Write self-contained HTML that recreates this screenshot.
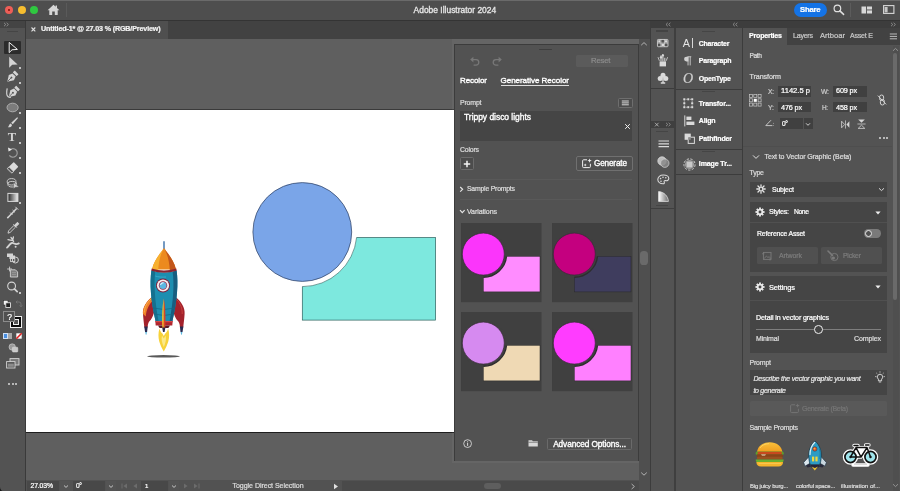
<!DOCTYPE html>
<html><head><meta charset="utf-8"><title>Adobe Illustrator 2024</title>
<style>
html,body{margin:0;padding:0;background:#535353;}
#app{will-change:transform;position:relative;width:900px;height:491px;overflow:hidden;background:#535353;font-family:"Liberation Sans",sans-serif;}
#app div,#app span,#app svg{position:absolute;}
.t{white-space:pre;line-height:12px;height:12px;-webkit-text-stroke:0.22px currentColor;}
svg{overflow:visible;}
</style></head><body><div id="app">
<div style="position:absolute;left:0px;top:20px;width:650px;height:19px;background:#424242;"></div><div style="position:absolute;left:26px;top:39px;width:624px;height:441px;background:#5f5f5f;"></div><div style="position:absolute;left:26px;top:21px;width:142px;height:18px;background:#4f4f4f;"></div><svg style="left:30px;top:26px" width="7" height="7" viewBox="0 0 7 7"><path d="M1.500 1.500L5.300 5.300M5.300 1.500L1.500 5.300" stroke="#e0e0e0" stroke-width="1.100" fill="none"/></svg>
<div style="position:absolute;left:26px;top:109px;width:428px;height:323px;background:#ffffff;"></div><div style="position:absolute;left:26px;top:432px;width:428px;height:1px;background:#1e1e1e;"></div><div style="position:absolute;left:26px;top:108.5px;width:428px;height:0.5px;background:#3a3a3a;"></div><div style="position:absolute;left:638.5px;top:39px;width:11.5px;height:452px;background:#4f4f4f;"></div><div style="position:absolute;left:640.2px;top:250.5px;width:7.8px;height:14.5px;background:#6a6a6a;border-radius:3.6px;"></div><svg style="left:640px;top:41px" width="8" height="6" viewBox="0 0 8 6"><path d="M1.2 4.2L4 1.6L6.8 4.2" stroke="#bdbdbd" stroke-width="0.9" fill="none"/></svg>
<svg style="left:640px;top:471px" width="8" height="6" viewBox="0 0 8 6"><path d="M1.2 1.6L4 4.2L6.8 1.6" stroke="#bdbdbd" stroke-width="0.9" fill="none"/></svg>
<svg style="left:0px;top:0px" width="900" height="491" viewBox="0 0 900 491"><defs><mask id="cut"><rect x="0" y="0" width="900" height="491" fill="#fff"/><circle cx="302.3" cy="232" r="54.6" fill="#000"/></mask></defs><rect x="302.3" y="237.5" width="133.3" height="82.6" fill="#7de8de" stroke="#2d5f5c" stroke-width="0.7" mask="url(#cut)"/><path d="M302.3 286.600A54.600 54.600 0 0 0 356.600 237.500" fill="none" stroke="#2d5f5c" stroke-width="0.6"/><circle cx="302.3" cy="232" r="49.4" fill="#7aa5e8" stroke="#2c3d5e" stroke-width="0.7"/></svg>
<svg style="left:0px;top:0px" width="900" height="491" viewBox="0 0 900 491">
<defs><filter id="shb" x="-20%" y="-200%" width="140%" height="500%"><feGaussianBlur stdDeviation="0.7"/></filter></defs>
<ellipse cx="163.5" cy="356.3" rx="16.500" ry="1.300" fill="#3c3c3c" opacity="0.850" filter="url(#shb)"/>
<path d="M164 241.200V249" stroke="#3a6fa8" stroke-width="1.400"/>
<path d="M163.800 351.500C160 345 156.800 338 159.400 328.500C160.400 331.500 161.600 333 162.400 333.500L163.800 336L165.200 333.500C166 333 167.200 331.500 168.200 328.500C170.800 338 167.600 345 163.800 351.500Z" fill="#f7d23a"/>
<path d="M163.800 347C162 343 161 339 162 335.500L163.800 338.500L165.600 335.500C166.600 339 165.600 343 163.800 347Z" fill="#fbe98a"/>
<g id="finL">
<path d="M152.600 296.500C146 301.500 142.400 308 143 314C143.300 319 143.900 323 144.400 327.500L147.600 327.500C147.800 323.500 148.800 321.500 150.600 320C152 318 154 314 155 309Z" fill="#a3222c"/>
<path d="M144.200 326.600H147.700L147.100 332H145.100Z" fill="#2a2a50"/>
<path d="M145.200 332H147L146.400 334.800H145.800Z" fill="#5ab8e0"/>
</g>
<path d="M152.600 296.500C146 301.500 142.400 308 143 314L145.800 316.500C146.200 309.500 149.400 303.500 153.600 300Z" fill="#ee7f2a"/>
<path d="M151.400 298.600C147 302.500 144.400 307.500 144.200 312.500" stroke="#f9b44a" stroke-width="0.900" fill="none"/>
<g transform="translate(327.600 0) scale(-1 1)">
<path d="M152.600 296.500C146 301.500 142.400 308 143 314C143.300 319 143.900 323 144.400 327.500L147.600 327.500C147.800 323.500 148.800 321.500 150.600 320C152 318 154 314 155 309Z" fill="#a3222c"/>
<path d="M151 299.500C147 303.500 145.200 308.500 145.400 314" stroke="#c8403c" stroke-width="1" fill="none"/>
<path d="M144.200 326.600H147.700L147.100 332H145.100Z" fill="#2a2a50"/>
<path d="M145.200 332H147L146.400 334.800H145.800Z" fill="#5ab8e0"/>
</g>
<path d="M151.400 270.500C149.600 283 150.600 300 155.600 321.300L172.400 321.300C177.400 300 178.400 283 176.600 270.500Q164 274.500 151.400 270.500Z" fill="#1c8eb0"/>
<path d="M151.400 270.500C149.600 283 150.600 300 155.600 321.300L158.600 321.300C154.600 300 153.800 284 155.200 271.600Z" fill="#15708e"/>
<path d="M172.600 271.700C174.400 284 173.400 300 169.600 321.300L172.400 321.300C177.400 300 178.400 283 176.600 270.500Z" fill="#175e80"/>
<path d="M153 308Q164 311 174.800 308M154.200 314Q164 317 173.600 314" stroke="#136a88" stroke-width="0.800" fill="none"/>
<path d="M155.300 276C158 277 162 277.400 166 277" stroke="#3fb0cf" stroke-width="0.800" fill="none"/>
<path d="M164 248C161.500 252 154 260 152 269.400L176 269.400C174 260 166.500 252 164 248Z" fill="#ec8a1e"/>
<path d="M164 248C161.500 252 154 260 152 269.400L158.200 270.200C158.600 261 161 253 164 248Z" fill="#f7b030"/>
<path d="M164 248C166.500 252 174 260 176 269.400L169.800 270.200C169.400 261 167 253 164 248Z" fill="#c2561a"/>
<path d="M151.700 268.500Q164 272.300 176.300 268.500L176.700 270.700Q164 274.600 151.300 270.700Z" fill="#8a2430"/>
<circle cx="163" cy="285.500" r="7" fill="#7e1f3c"/>
<circle cx="163" cy="285.500" r="6.100" fill="#f6eeee"/>
<circle cx="163" cy="285.500" r="4.200" fill="#a02848"/>
<circle cx="163" cy="285.500" r="3.500" fill="#5bb8e2"/>
<path d="M160.600 285A2.600 2.600 0 0 1 163.600 282.800" stroke="#ffffff" stroke-width="1" fill="none"/>
<path d="M155.300 321H172.700L172.300 325.400H155.700Z" fill="#b0262e"/>
<path d="M155.300 321H172.700V322.200H155.300Z" fill="#d04a4a"/>
<path d="M158 325.400H170L168.400 328H159.600Z" fill="#5a1a26"/>
<path d="M163.800 298.500C162.200 306 161.800 318 162.400 328H163.800Z" fill="#f5c02c"/>
<path d="M163.800 298.500C165.400 306 165.800 318 165.200 328H163.800Z" fill="#d8452a"/>
<path d="M162.200 327.500H165.400L164.600 332H163Z" fill="#2a2a4a"/>
</svg>
<div style="position:absolute;left:451.5px;top:39px;width:187px;height:424.3px;background:rgba(255,255,255,0.045);"></div><div style="position:absolute;left:453.8px;top:43.9px;width:184.9px;height:417.3px;background:#3c3c3c;"></div><div style="position:absolute;left:454.9px;top:45.1px;width:183.2px;height:415.5px;background:#525252;"></div><div style="position:absolute;left:539px;top:48.7px;width:13px;height:1.6px;background:#3e3e3e;border-radius:1px;"></div><svg style="left:469px;top:56px" width="12" height="11" viewBox="0 0 12 11"><path d="M2.400 3.600H7A2.800 2.800 0 0 1 7 9.200H4.600" stroke="#787878" stroke-width="1.300" fill="none"/><path d="M4.400 0.800L1.200 3.600L4.400 6.400Z" fill="#787878"/></svg>
<svg style="left:491px;top:56px" width="12" height="11" viewBox="0 0 12 11"><path d="M9.600 3.600H5A2.800 2.800 0 0 0 5 9.200H7.400" stroke="#787878" stroke-width="1.300" fill="none"/><path d="M7.600 0.800L10.800 3.600L7.600 6.400Z" fill="#787878"/></svg>
<div style="position:absolute;left:576px;top:55.3px;width:52px;height:11.7px;background:#5b5b5b;border-radius:1.5px;"></div><div style="position:absolute;left:500.5px;top:84.5px;width:68.5px;height:0.8px;background:#dedede;"></div><div style="position:absolute;left:618px;top:97.5px;width:14.5px;height:10.5px;background:#4c4c4c;box-sizing:border-box;border:0.8px solid #6e6e6e;border-radius:1.5px;"></div><svg style="left:621px;top:100px" width="9" height="6" viewBox="0 0 9 6"><path d="M0.800 1H7.800M0.800 2.900H7.800M0.800 4.800H7.800" stroke="#e6e6e6" stroke-width="0.9"/></svg>
<div style="position:absolute;left:460px;top:111.3px;width:172px;height:29.4px;background:#454545;"></div><svg style="left:623.5px;top:123px" width="7" height="7" viewBox="0 0 7 7"><path d="M1.200 1.200L5.800 5.800M5.800 1.200L1.200 5.800" stroke="#f0f0f0" stroke-width="1" fill="none"/></svg>
<div style="position:absolute;left:460px;top:157px;width:14.4px;height:13.4px;background:#4c4c4c;box-sizing:border-box;border:0.8px solid #6c6c6c;border-radius:1.5px;"></div><svg style="left:463.2px;top:159.7px" width="8" height="8" viewBox="0 0 8 8"><path d="M4 0.800V7.200M0.800 4H7.200" stroke="#f4f4f4" stroke-width="1.500"/></svg>
<div style="position:absolute;left:575.5px;top:155.8px;width:57.2px;height:15.1px;background:#505050;box-sizing:border-box;border:0.8px solid #707070;border-radius:2px;"></div><svg style="left:580.5px;top:158.3px" width="11" height="11" viewBox="0 0 11 11"><path d="M6 1.800H2.600A1 1 0 0 0 1.600 2.800V8.600A1 1 0 0 0 2.600 9.600H8.400A1 1 0 0 0 9.400 8.600V5.800" stroke="#f0f0f0" stroke-width="1" fill="none"/><path d="M8.600 0.400L9.200 2L10.800 2.600L9.200 3.200L8.600 4.800L8 3.200L6.400 2.600L8 2Z" fill="#f0f0f0"/><path d="M4.200 5.600L4.700 6.600L5.700 7.100L4.700 7.600L4.200 8.600L3.700 7.600L2.700 7.100L3.700 6.600Z" fill="#f0f0f0"/></svg>
<div style="position:absolute;left:460px;top:179px;width:172px;height:0.8px;background:#595959;"></div><div style="position:absolute;left:460px;top:199px;width:172px;height:0.8px;background:#595959;"></div><svg style="left:459px;top:186px" width="5" height="7" viewBox="0 0 5 7"><path d="M1.200 1L3.600 3.300L1.200 5.600" stroke="#e6e6e6" stroke-width="1.150" fill="none"/></svg>
<svg style="left:458.5px;top:209px" width="7" height="5" viewBox="0 0 7 5"><path d="M1 1.200L3.300 3.600L5.600 1.200" stroke="#e6e6e6" stroke-width="1.150" fill="none"/></svg>
<svg style="left:461px;top:222.6px" width="80.5" height="79.2" viewBox="0 0 80.5 79.2"><rect x="0" y="0" width="80.5" height="79.2" fill="#404040"/><clipPath id="c461222"><rect x="0" y="0" width="80.5" height="79.2"/></clipPath><g clip-path="url(#c461222)"><rect x="22.3" y="33.3" width="56.7" height="35.6" fill="#ff8cff" stroke="#2a2a2a" stroke-width="0.5"/><circle cx="22.3" cy="31.1" r="23.2" fill="#404040"/><path d="M22.3 54.300000000000004A23.2 23.2 0 0 0 45.5 33.3" stroke="#2e2e2e" stroke-width="1.4" fill="none"/><circle cx="22.3" cy="31.1" r="21.0" fill="#fb35fb" stroke="#3a2a3a" stroke-width="0.7"/></g></svg>
<svg style="left:551.5px;top:222.6px" width="80.5" height="79.2" viewBox="0 0 80.5 79.2"><rect x="0" y="0" width="80.5" height="79.2" fill="#404040"/><clipPath id="c551222"><rect x="0" y="0" width="80.5" height="79.2"/></clipPath><g clip-path="url(#c551222)"><rect x="22.3" y="33.3" width="56.7" height="35.6" fill="#3f3d5e" stroke="#2a2a2a" stroke-width="0.5"/><circle cx="22.3" cy="31.1" r="23.2" fill="#404040"/><path d="M22.3 54.300000000000004A23.2 23.2 0 0 0 45.5 33.3" stroke="#2e2e2e" stroke-width="1.4" fill="none"/><circle cx="22.3" cy="31.1" r="21.0" fill="#c4007f" stroke="#3a2a3a" stroke-width="0.7"/></g></svg>
<svg style="left:461px;top:312.2px" width="80.5" height="79.2" viewBox="0 0 80.5 79.2"><rect x="0" y="0" width="80.5" height="79.2" fill="#404040"/><clipPath id="c461312"><rect x="0" y="0" width="80.5" height="79.2"/></clipPath><g clip-path="url(#c461312)"><rect x="22.3" y="33.3" width="56.7" height="35.6" fill="#efd9b4" stroke="#2a2a2a" stroke-width="0.5"/><circle cx="22.3" cy="31.1" r="23.2" fill="#404040"/><path d="M22.3 54.300000000000004A23.2 23.2 0 0 0 45.5 33.3" stroke="#2e2e2e" stroke-width="1.4" fill="none"/><circle cx="22.3" cy="31.1" r="21.0" fill="#d68af0" stroke="#3a2a3a" stroke-width="0.7"/></g></svg>
<svg style="left:551.5px;top:312.2px" width="80.5" height="79.2" viewBox="0 0 80.5 79.2"><rect x="0" y="0" width="80.5" height="79.2" fill="#404040"/><clipPath id="c551312"><rect x="0" y="0" width="80.5" height="79.2"/></clipPath><g clip-path="url(#c551312)"><rect x="22.3" y="33.3" width="56.7" height="35.6" fill="#ff80ff" stroke="#2a2a2a" stroke-width="0.5"/><circle cx="22.3" cy="31.1" r="23.2" fill="#404040"/><path d="M22.3 54.300000000000004A23.2 23.2 0 0 0 45.5 33.3" stroke="#2e2e2e" stroke-width="1.4" fill="none"/><circle cx="22.3" cy="31.1" r="21.0" fill="#ff3cff" stroke="#3a2a3a" stroke-width="0.7"/></g></svg>
<svg style="left:463px;top:439.3px" width="10" height="10" viewBox="0 0 10 10"><circle cx="4.600" cy="4.600" r="3.900" stroke="#e6e6e6" stroke-width="0.8" fill="none"/><path d="M4.600 3.900V6.900" stroke="#e6e6e6" stroke-width="0.9"/><circle cx="4.600" cy="2.700" r="0.550" fill="#e6e6e6"/></svg>
<svg style="left:527.5px;top:439.3px" width="11" height="9" viewBox="0 0 11 9"><path d="M0.500 1.200H4L4.900 2.200H9.800V7.600H0.500Z" fill="#d8d8d8"/><path d="M0.500 3.300H9.800" stroke="#535353" stroke-width="0.6"/></svg>
<div style="position:absolute;left:546.8px;top:437.5px;width:85.4px;height:12.2px;background:#505050;box-sizing:border-box;border:0.8px solid #6a6a6a;border-radius:1.5px;"></div><div style="position:absolute;left:650px;top:20px;width:250px;height:8px;background:#3d3d3d;"></div><svg style="left:665px;top:21.7px" width="7" height="5" viewBox="0 0 7 5"><path d="M2.800 0.800L1 2.500L2.800 4.200M5.400 0.800L3.600 2.500L5.400 4.200" stroke="#9a9a9a" stroke-width="0.8" fill="none"/></svg>
<svg style="left:732px;top:21.7px" width="7" height="5" viewBox="0 0 7 5"><path d="M2.800 0.800L1 2.500L2.800 4.200M5.400 0.800L3.600 2.500L5.400 4.200" stroke="#9a9a9a" stroke-width="0.8" fill="none"/></svg>
<svg style="left:890px;top:21.7px" width="7" height="5" viewBox="0 0 7 5"><path d="M1 0.800L2.800 2.500L1 4.200M3.600 0.800L5.400 2.500L3.600 4.200" stroke="#9a9a9a" stroke-width="0.8" fill="none"/></svg>
<div style="position:absolute;left:650px;top:28px;width:1px;height:463px;background:#3c3c3c;"></div><div style="position:absolute;left:651px;top:27.5px;width:22.8px;height:463.5px;background:#535353;"></div><div style="position:absolute;left:673.8px;top:27.5px;width:2.2px;height:463.5px;background:#3f3f3f;"></div><div style="position:absolute;left:656px;top:30.3px;width:12px;height:1.7px;background:#434343;"></div><div style="position:absolute;left:651px;top:88px;width:22.8px;height:1px;background:#3c3c3c;"></div><svg style="left:656.6px;top:38.8px" width="11.8" height="8.2" viewBox="0 0 13 9"><rect x="0.500" y="0.500" width="11.600" height="8" rx="0.8" fill="none" stroke="#dadada" stroke-width="0.9"/><path d="M0.500 4.500H12M4.300 0.500V8.500M8.200 0.500V8.500" stroke="#dadada" stroke-width="0.8"/><rect x="1.300" y="1.300" width="2.400" height="2.600" fill="#dadada"/><rect x="8.800" y="1.300" width="2.600" height="2.600" fill="#dadada"/><rect x="4.900" y="5.100" width="2.800" height="2.700" fill="#dadada"/></svg>
<svg style="left:657px;top:54px" width="12" height="13" viewBox="0 0 12 13"><rect x="2.600" y="7.400" width="6.400" height="5" fill="#dadada"/><path d="M4 7.400V3.400M5.900 7.400V1.200M7.800 7.400V3.800" stroke="#dadada" stroke-width="1"/><path d="M3 4L4 1.600L5 4ZM5 2L5.900 0L6.800 2ZM1 3.200L2.400 6.800M10.600 3.200L9.200 6.800" stroke="#dadada" stroke-width="0.8" fill="#dadada"/></svg>
<svg style="left:657px;top:72px" width="12" height="12" viewBox="0 0 12 12"><circle cx="6" cy="3.200" r="2.500" fill="#dadada"/><circle cx="3.200" cy="6.400" r="2.500" fill="#dadada"/><circle cx="8.800" cy="6.400" r="2.500" fill="#dadada"/><path d="M6 5V10.400M3.800 11H8.200" stroke="#dadada" stroke-width="1.300"/></svg>
<div style="position:absolute;left:650.5px;top:120.5px;width:23.5px;height:88px;background:#3f3f3f;"></div><div style="position:absolute;left:651px;top:128px;width:22.8px;height:80px;background:#535353;"></div><svg style="left:653.5px;top:122px" width="6" height="5.5" viewBox="0 0 6 5.5"><path d="M1 0.800L4.600 4.400M4.600 0.800L1 4.400" stroke="#c0c0c0" stroke-width="0.8" fill="none"/></svg>
<svg style="left:665px;top:122.2px" width="7" height="5" viewBox="0 0 7 5"><path d="M1 0.800L2.800 2.500L1 4.200M3.600 0.800L5.400 2.500L3.600 4.200" stroke="#9a9a9a" stroke-width="0.8" fill="none"/></svg>
<div style="position:absolute;left:656px;top:131px;width:12px;height:1.2px;background:#454545;"></div><div style="position:absolute;left:656px;top:205px;width:12px;height:1.2px;background:#454545;"></div><svg style="left:657.5px;top:139.5px" width="12" height="8" viewBox="0 0 12 8"><path d="M0.500 1H11M0.500 3.800H11M0.500 6.600H11" stroke="#dadada" stroke-width="1.200"/></svg>
<svg style="left:656.5px;top:155.5px" width="13" height="12" viewBox="0 0 13 12"><circle cx="5" cy="5" r="4.200" fill="#bdbdbd" stroke="#e0e0e0" stroke-width="0.7"/><circle cx="7.800" cy="7.200" r="4.200" fill="#8a8a8a" stroke="#d0d0d0" stroke-width="0.7" fill-opacity="0.85"/></svg>
<svg style="left:656.5px;top:174px" width="13" height="11" viewBox="0 0 13 11"><path d="M6.400 1C3 1 0.800 3 0.800 5.600C0.800 8.200 3.200 9.800 6 9.800C7.400 9.800 7.600 8.800 7.200 8C6.800 7 7.600 6.400 8.600 6.600C10.400 7 11.800 6 11.800 4.400C11.800 2.400 9.400 1 6.400 1Z" fill="none" stroke="#dadada" stroke-width="1.100"/><circle cx="3.600" cy="4.600" r="0.800" fill="#dadada"/><circle cx="6" cy="3.200" r="0.800" fill="#dadada"/><circle cx="8.800" cy="3.800" r="0.800" fill="#dadada"/><circle cx="4" cy="7.200" r="0.800" fill="#dadada"/></svg>
<svg style="left:658px;top:191px" width="11" height="11" viewBox="0 0 11 11"><defs><linearGradient id="gr1" x1="0" x2="1"><stop offset="0" stop-color="#ffffff"/><stop offset="1" stop-color="#6a6a6a"/></linearGradient></defs><path d="M0.600 10.400V0.600C6 1 10 5 10.400 10.400Z" fill="url(#gr1)" stroke="#e0e0e0" stroke-width="0.8"/></svg>
<div style="position:absolute;left:676px;top:27.5px;width:66px;height:463.5px;background:#535353;"></div><div style="position:absolute;left:742px;top:28px;width:1px;height:463px;background:#3c3c3c;"></div><div style="position:absolute;left:676px;top:88.5px;width:66px;height:1px;background:#3c3c3c;"></div><div style="position:absolute;left:676px;top:148.5px;width:66px;height:1px;background:#3c3c3c;"></div><div style="position:absolute;left:676px;top:173.8px;width:66px;height:1px;background:#3c3c3c;"></div><div style="position:absolute;left:702px;top:31px;width:13px;height:1.2px;background:#454545;"></div><div style="position:absolute;left:702px;top:91px;width:13px;height:1.2px;background:#454545;"></div><div style="position:absolute;left:702px;top:151px;width:13px;height:1.2px;background:#454545;"></div><span class="t" style="left:682.8px;top:36.5px;font-size:10.8px;line-height:13px;height:13px;color:#e4e4e4;-webkit-text-stroke:0;">A</span><div style="position:absolute;left:692.2px;top:38.3px;width:0.8px;height:9.4px;background:#d8d8d8;"></div><svg style="left:682.7px;top:55.7px" width="9" height="10" viewBox="0 0 10 11"><path d="M6 0.800H3.800A2.600 2.600 0 0 0 3.800 6H6Z" fill="#d0d0d0"/><path d="M5.600 0.800V10.400M8 0.800V10.400M5 0.800H9.200" stroke="#d0d0d0" stroke-width="1"/></svg>
<span class="t" style="left:683px;top:70.600px;font-family:'Liberation Serif',serif;font-style:italic;font-size:14px;line-height:15px;height:15px;color:#cfcfcf;">O</span><svg style="left:683px;top:98.3px" width="10.5" height="10.5" viewBox="0 0 10.5 10.5"><rect x="1.300" y="1.300" width="7.900" height="7.900" fill="none" stroke="#dadada" stroke-width="0.700" stroke-dasharray="1 0.900"/><rect x="0.3" y="0.3" width="2" height="2" fill="#dadada"/><rect x="4.25" y="0.3" width="2" height="2" fill="#dadada"/><rect x="8.2" y="0.3" width="2" height="2" fill="#dadada"/><rect x="0.3" y="4.25" width="2" height="2" fill="#dadada"/><rect x="8.2" y="4.25" width="2" height="2" fill="#dadada"/><rect x="0.3" y="8.2" width="2" height="2" fill="#dadada"/><rect x="4.25" y="8.2" width="2" height="2" fill="#dadada"/><rect x="8.2" y="8.2" width="2" height="2" fill="#dadada"/></svg>
<svg style="left:683.5px;top:115px" width="11" height="12" viewBox="0 0 11 12"><path d="M0.800 0.400V11.400" stroke="#dadada" stroke-width="1"/><rect x="2.400" y="1.600" width="5" height="3.400" fill="#dadada"/><rect x="2.400" y="6.600" width="8" height="3.400" fill="#dadada"/></svg>
<svg style="left:683.5px;top:133px" width="11" height="11" viewBox="0 0 11 11"><rect x="0.600" y="0.600" width="6.200" height="6.200" fill="#dadada"/><rect x="4.200" y="4.200" width="6.200" height="6.200" fill="#535353" stroke="#dadada" stroke-width="1"/><rect x="4.200" y="4.200" width="2.600" height="2.600" fill="#8c8c8c"/></svg>
<svg style="left:682.5px;top:157.5px" width="13" height="13" viewBox="0 0 13 13"><circle cx="6.500" cy="6.500" r="4.600" fill="#9a9a9a"/><circle cx="6.500" cy="6.500" r="5.600" fill="none" stroke="#dadada" stroke-width="0.9" stroke-dasharray="2.400 1.400"/><rect x="3.800" y="3.800" width="5.400" height="5.400" fill="#c8c8c8"/></svg>
<div style="position:absolute;left:743px;top:28px;width:157px;height:16.5px;background:#424242;"></div><div style="position:absolute;left:743px;top:28px;width:43.5px;height:16.5px;background:#535353;"></div><div style="position:absolute;left:743px;top:44.5px;width:157px;height:446.5px;background:#535353;"></div><svg style="left:889px;top:33px" width="9" height="7" viewBox="0 0 9 7"><path d="M0.800 1H8M0.800 3.400H8M0.800 5.800H8" stroke="#c8c8c8" stroke-width="0.900"/></svg>
<div style="position:absolute;left:892.5px;top:46px;width:6px;height:445px;background:#4f4f4f;"></div><div style="position:absolute;left:893.3px;top:53px;width:4.2px;height:247px;background:#6a6a6a;border-radius:2.100px;"></div><svg style="left:892px;top:46.5px" width="7" height="5" viewBox="0 0 7 5"><path d="M1 3.800L3.500 1.400L6 3.800" stroke="#9a9a9a" stroke-width="0.900" fill="none"/></svg>
<svg style="left:892px;top:483px" width="7" height="5" viewBox="0 0 7 5"><path d="M1 1.200L3.500 3.600L6 1.200" stroke="#9a9a9a" stroke-width="0.900" fill="none"/></svg>
<svg style="left:749px;top:93.5px" width="13" height="13" viewBox="0 0 13 13"><rect x="0.50" y="0.50" width="3" height="3" fill="none" stroke="#c8c8c8" stroke-width="0.700"/><rect x="4.80" y="0.50" width="3" height="3" fill="none" stroke="#c8c8c8" stroke-width="0.700"/><rect x="9.10" y="0.50" width="3" height="3" fill="none" stroke="#c8c8c8" stroke-width="0.700"/><rect x="0.50" y="4.80" width="3" height="3" fill="none" stroke="#c8c8c8" stroke-width="0.700"/><rect x="4.80" y="4.80" width="3" height="3" fill="#ffffff"/><rect x="9.10" y="4.80" width="3" height="3" fill="none" stroke="#c8c8c8" stroke-width="0.700"/><rect x="0.50" y="9.10" width="3" height="3" fill="none" stroke="#c8c8c8" stroke-width="0.700"/><rect x="4.80" y="9.10" width="3" height="3" fill="none" stroke="#c8c8c8" stroke-width="0.700"/><rect x="9.10" y="9.10" width="3" height="3" fill="none" stroke="#c8c8c8" stroke-width="0.700"/></svg>
<div style="position:absolute;left:778px;top:86.4px;width:33px;height:10.6px;background:#404040;"></div><div style="position:absolute;left:833px;top:86.4px;width:34px;height:10.6px;background:#404040;"></div><div style="position:absolute;left:778px;top:101.8px;width:33px;height:10.6px;background:#404040;"></div><div style="position:absolute;left:833px;top:101.8px;width:34px;height:10.6px;background:#404040;"></div><div style="position:absolute;left:779.7px;top:118px;width:23px;height:11px;background:#404040;"></div><div style="position:absolute;left:803.5px;top:118px;width:9.5px;height:11px;background:#404040;"></div><svg style="left:805.3px;top:121.5px" width="6" height="5" viewBox="0 0 6 5"><path d="M1 1.300L3 3.300L5 1.300" stroke="#e0e0e0" stroke-width="0.900" fill="none"/></svg>
<svg style="left:764.5px;top:118.5px" width="10" height="9" viewBox="0 0 10 9"><path d="M6 1.200L0.800 6.600H7.400" stroke="#d0d0d0" stroke-width="0.900" fill="none"/><circle cx="8.600" cy="4.200" r="0.450" fill="#d0d0d0"/><circle cx="8.600" cy="6.600" r="0.450" fill="#d0d0d0"/></svg>
<svg style="left:877px;top:93.5px" width="10" height="12" viewBox="0 0 10 12"><rect x="2.600" y="1" width="4" height="5.600" rx="2" fill="none" stroke="#d6d6d6" stroke-width="1"/><rect x="3.400" y="5.400" width="4" height="5.600" rx="2" fill="none" stroke="#d6d6d6" stroke-width="1"/><path d="M0.800 1.600L9.200 10.400" stroke="#d6d6d6" stroke-width="0.900"/></svg>
<svg style="left:840.5px;top:119.5px" width="9" height="9" viewBox="0 0 9 9"><path d="M0.600 1.200L3.600 4.500L0.600 7.800Z" fill="none" stroke="#d6d6d6" stroke-width="0.800"/><path d="M8.400 1.200L5.400 4.500L8.400 7.800Z" fill="#d6d6d6"/><path d="M4.500 0.400V8.600" stroke="#d6d6d6" stroke-width="0.700"/></svg>
<svg style="left:856.5px;top:119px" width="9" height="10" viewBox="0 0 9 10"><path d="M1.200 0.600L4.500 3.800L7.800 0.600Z" fill="#d6d6d6"/><path d="M1.200 9.400L4.500 6.200L7.800 9.400Z" fill="none" stroke="#d6d6d6" stroke-width="0.800"/><path d="M0.400 5H8.600" stroke="#d6d6d6" stroke-width="0.700"/></svg>
<div style="position:absolute;left:879.3px;top:136.8px;width:2px;height:2px;background:#d8d8d8;border-radius:50%;"></div><div style="position:absolute;left:882.5px;top:136.8px;width:2px;height:2px;background:#d8d8d8;border-radius:50%;"></div><div style="position:absolute;left:885.6999999999999px;top:136.8px;width:2px;height:2px;background:#d8d8d8;border-radius:50%;"></div><div style="position:absolute;left:743px;top:145.8px;width:149px;height:0.8px;background:#4e4e4e;"></div><svg style="left:751.5px;top:153.5px" width="8" height="6" viewBox="0 0 8 6"><path d="M1 1.400L4 4.400L7 1.400" stroke="#e0e0e0" stroke-width="1" fill="none"/></svg>
<div style="position:absolute;left:750px;top:182.4px;width:137px;height:14.4px;background:#454545;"></div><svg style="left:755.5px;top:184.3px" width="10" height="10" viewBox="0 0 10 10"><g stroke="#e6e6e6" stroke-width="1.300" stroke-linecap="round"><path d="M5 0.800V3.400M5 6.600V9.200M0.800 5H3.400M6.600 5H9.200M2 2L3.700 3.700M6.300 6.300L8 8M8 2L6.300 3.700M3.700 6.300L2 8"/></g></svg>
<svg style="left:878px;top:187.3px" width="7" height="5" viewBox="0 0 7 5"><path d="M1 1.300L3.500 3.600L6 1.300" stroke="#e6e6e6" stroke-width="0.900" fill="none"/></svg>
<div style="position:absolute;left:750px;top:202px;width:137px;height:69.5px;background:#454545;"></div><div style="position:absolute;left:750px;top:222.4px;width:137px;height:0.8px;background:#505050;"></div><svg style="left:755.3px;top:207.3px" width="10" height="10" viewBox="0 0 11 11"><rect x="4.500" y="0.500" width="2" height="10" fill="#e8e8e8" transform="rotate(0 5.500 5.500)"/><rect x="4.500" y="0.500" width="2" height="10" fill="#e8e8e8" transform="rotate(45 5.500 5.500)"/><rect x="4.500" y="0.500" width="2" height="10" fill="#e8e8e8" transform="rotate(90 5.500 5.500)"/><rect x="4.500" y="0.500" width="2" height="10" fill="#e8e8e8" transform="rotate(135 5.500 5.500)"/><circle cx="5.500" cy="5.500" r="3.500" fill="#e8e8e8"/><circle cx="5.500" cy="5.500" r="1.600" fill="#454545"/></svg>
<svg style="left:874.5px;top:210.5px" width="6" height="4" viewBox="0 0 6 4"><path d="M0.400 0.400H5.600L3 3.600Z" fill="#f0f0f0"/></svg>
<div style="position:absolute;left:864px;top:229.3px;width:17px;height:8.4px;background:#7a7a7a;border-radius:4.200px;"></div><div style="position:absolute;left:864.6px;top:229.9px;width:7.2px;height:7.2px;background:#505050;border-radius:50%;box-sizing:border-box;border:1px solid #e8e8e8;"></div><div style="position:absolute;left:757px;top:247px;width:61px;height:17.3px;background:#505050;border-radius:1.500px;"></div><div style="position:absolute;left:821px;top:247px;width:61px;height:17.3px;background:#505050;border-radius:1.500px;"></div><svg style="left:762px;top:251px" width="11" height="10" viewBox="0 0 11 10"><rect x="1.400" y="1.400" width="7.600" height="7" fill="none" stroke="#7a7a7a" stroke-width="0.900"/><path d="M0 2.800H2.400M8 9.600V7.200M2.200 7.600L4.400 5L6 6.600L7.200 5.600L8.800 7.600" stroke="#7a7a7a" stroke-width="0.800" fill="none"/></svg>
<svg style="left:827px;top:250px" width="13" height="12" viewBox="0 0 13 12"><circle cx="7.400" cy="7" r="3.600" fill="none" stroke="#7a7a7a" stroke-width="0.900"/><circle cx="6.400" cy="8" r="1.600" fill="#7a7a7a"/><path d="M1 1L5.400 5.400" stroke="#7a7a7a" stroke-width="1.600" stroke-linecap="round"/></svg>
<div style="position:absolute;left:750px;top:276px;width:137px;height:77px;background:#454545;"></div><div style="position:absolute;left:750px;top:300px;width:137px;height:0.8px;background:#505050;"></div><svg style="left:755.3px;top:282.0px" width="10" height="10" viewBox="0 0 11 11"><rect x="4.500" y="0.500" width="2" height="10" fill="#e8e8e8" transform="rotate(0 5.500 5.500)"/><rect x="4.500" y="0.500" width="2" height="10" fill="#e8e8e8" transform="rotate(45 5.500 5.500)"/><rect x="4.500" y="0.500" width="2" height="10" fill="#e8e8e8" transform="rotate(90 5.500 5.500)"/><rect x="4.500" y="0.500" width="2" height="10" fill="#e8e8e8" transform="rotate(135 5.500 5.500)"/><circle cx="5.500" cy="5.500" r="3.500" fill="#e8e8e8"/><circle cx="5.500" cy="5.500" r="1.600" fill="#454545"/></svg>
<svg style="left:874.5px;top:285.3px" width="6" height="4" viewBox="0 0 6 4"><path d="M0.400 0.400H5.600L3 3.600Z" fill="#f0f0f0"/></svg>
<div style="position:absolute;left:756px;top:329.1px;width:125px;height:0.9px;background:#7e7e7e;"></div><div style="position:absolute;left:814.4px;top:325.1px;width:8.8px;height:8.8px;background:#454545;border-radius:50%;box-sizing:border-box;border:1.500px solid #f2f2f2;"></div><div style="position:absolute;left:750px;top:370.4px;width:137px;height:25px;background:#454545;"></div><svg style="left:873.5px;top:371px" width="12" height="13" viewBox="0 0 12 13"><path d="M6 3.200A2.800 2.800 0 0 0 4.400 8.200V9.800H7.600V8.200A2.800 2.800 0 0 0 6 3.200Z" fill="none" stroke="#e6e6e6" stroke-width="0.900"/><path d="M4.800 11H7.200M6 0.400V1.600M1.200 5.600H2.400M9.600 5.600H10.800M2.400 2L3.300 2.900M9.600 2L8.700 2.900" stroke="#e6e6e6" stroke-width="0.800"/></svg>
<div style="position:absolute;left:750px;top:400.8px;width:137px;height:15px;background:#595959;border-radius:1.500px;"></div><svg style="left:789px;top:403px" width="11" height="11" viewBox="0 0 11 11"><path d="M6 1.800H2.600A1 1 0 0 0 1.600 2.800V8.600A1 1 0 0 0 2.600 9.600H8.400A1 1 0 0 0 9.400 8.600V5.800" stroke="#747474" stroke-width="1" fill="none"/><path d="M8.600 0.400L9.200 2L10.800 2.600L9.200 3.200L8.600 4.800L8 3.200L6.400 2.600L8 2Z" fill="#747474"/></svg>
<svg style="left:0px;top:0px" width="900" height="491" viewBox="0 0 900 491">
<defs><linearGradient id="bun" x1="0" y1="0" x2="0" y2="1"><stop offset="0" stop-color="#f9c03a"/><stop offset="1" stop-color="#ee9a1e"/></linearGradient></defs>
<path d="M757 452.600C757.400 446 763 442.200 769.700 442.200C776.400 442.200 782 446 782.400 452.600Z" fill="url(#bun)"/>
<path d="M760 448C761.500 445.400 765 443.800 769 443.600" stroke="#fcd86a" stroke-width="1" fill="none" opacity="0.800"/>
<path d="M755.600 453.400C755.600 452 756.600 451.600 757.400 451.600H782C782.800 451.600 783.800 452 783.800 453.400C783.800 454.400 783 454.800 782.400 454.800H757C756.400 454.800 755.600 454.400 755.600 453.400Z" fill="#5da02c"/>
<rect x="757.600" y="451.800" width="24.200" height="2.600" rx="1" fill="#c8481e"/>
<rect x="756.600" y="454.200" width="26.400" height="3" rx="1.400" fill="#8a4418"/>
<path d="M761 454.400H766L765 455.600H762Z" fill="#f4ead0"/>
<rect x="757" y="456.800" width="25.600" height="2.800" rx="1.300" fill="#9a5020"/>
<path d="M755.800 459.600H783.600C783.800 461 783 462.400 781.600 462.400H757.800C756.400 462.400 755.600 461 755.800 459.600Z" fill="#6ab02e"/>
<path d="M756.400 462H783C783 465 781.400 466.400 778.400 466.400H761C758 466.400 756.400 465 756.400 462Z" fill="#f5b42c"/>
<path d="M758.500 463.400H781" stroke="#fbd46a" stroke-width="0.800" opacity="0.800"/>
</svg>
<svg style="left:0px;top:0px" width="900" height="491" viewBox="0 0 900 491">
<path d="M809 456.500L803.600 462.500L805 466.200L810.600 463Z" fill="#dbe6ec" stroke="#22384a" stroke-width="0.700" stroke-linejoin="round"/>
<path d="M821 456.500L826.400 462.500L825 466.200L819.400 463Z" fill="#c9d6de" stroke="#22384a" stroke-width="0.700" stroke-linejoin="round"/>
<path d="M806 465.800L810 463.400L811 466.800L807.600 467.600Z" fill="#2a2a3a"/>
<path d="M824 465.800L820 463.400L819 466.800L822.400 467.600Z" fill="#2a2a3a"/>
<path d="M815 441C819.400 444.500 821.800 451 821.200 457.500C821 460.500 820.400 463 819.600 465.200H810.400C809.600 463 809 460.500 808.800 457.500C808.200 451 810.600 444.500 815 441Z" fill="#2d9cc4" stroke="#1c3848" stroke-width="0.800" stroke-linejoin="round"/>
<path d="M814.600 442.400C811.800 445 810 449.500 810 454.500" stroke="#d8eef6" stroke-width="1.300" fill="none" stroke-linecap="round"/>
<path d="M819.400 448C820.400 451 820.600 455 820 459" stroke="#1f7ea4" stroke-width="1.200" fill="none"/>
<circle cx="814.800" cy="449" r="2.200" fill="#e2562c" stroke="#1c3848" stroke-width="0.500"/>
<circle cx="814.500" cy="448.600" r="0.900" fill="#f6b23a"/>
<rect x="812" y="456.600" width="2.200" height="4.800" fill="#f0d83e"/>
<rect x="815.400" y="456.600" width="2.200" height="4.800" fill="#f0d83e"/>
<path d="M810.400 464.600H819.600L818.600 467.400H811.400Z" fill="#26263a"/>
<path d="M811.600 466.400L814.800 470.600L818 466.400L814.800 468.200Z" fill="#f2c82c"/>
</svg>
<svg style="left:843px;top:441.500px" width="35" height="26" viewBox="0 0 35 26">
<g stroke="#ffffff" stroke-width="3.400" fill="#ffffff" stroke-linejoin="round" stroke-linecap="round">
<circle cx="7.500" cy="15" r="6"/><circle cx="27.500" cy="15" r="6"/>
<path d="M7.500 15L13 5.600H24L27.500 15M13 5.600L18 15H7.500M24 5.600L18 15M11 3.400H15M22.600 3H26"/>
<path d="M10 23H25"/>
</g>
<circle cx="7.500" cy="15" r="5.600" fill="#9fe3ea" stroke="#111" stroke-width="1.700"/>
<circle cx="27.500" cy="15" r="5.600" fill="#9fe3ea" stroke="#111" stroke-width="1.700"/>
<path d="M7.500 15L13 5.600H24L27.500 15M13 5.600L18 15H7.500M24 5.600L18 15M11 3.400H15M22.600 3H26" stroke="#111" stroke-width="1.500" fill="none" stroke-linejoin="round" stroke-linecap="round"/>
<circle cx="7.500" cy="15" r="1.200" fill="#111"/><circle cx="27.500" cy="15" r="1.200" fill="#111"/>
<path d="M11 22.600H24" stroke="#d8d8d8" stroke-width="1"/>
</svg>
<div style="position:absolute;left:26px;top:480px;width:612.5px;height:11px;background:#525252;"></div><div style="position:absolute;left:26.7px;top:480.5px;width:32.6px;height:10.5px;background:#484848;"></div><div style="position:absolute;left:60.2px;top:480.5px;width:10px;height:10.5px;background:#545454;"></div><div style="position:absolute;left:73px;top:480.5px;width:31.7px;height:10.5px;background:#484848;"></div><div style="position:absolute;left:105.8px;top:480.5px;width:10px;height:10.5px;background:#545454;"></div><div style="position:absolute;left:141px;top:480.5px;width:27px;height:10.5px;background:#484848;"></div><div style="position:absolute;left:169px;top:480.5px;width:10px;height:10.5px;background:#545454;"></div><svg style="left:63px;top:483.5px" width="6" height="5" viewBox="0 0 6 5"><path d="M1 1.5L3 3.4L5 1.5" stroke="#d0d0d0" stroke-width="0.9" fill="none"/></svg>
<svg style="left:108px;top:483.5px" width="6" height="5" viewBox="0 0 6 5"><path d="M1 1.5L3 3.4L5 1.5" stroke="#d0d0d0" stroke-width="0.9" fill="none"/></svg>
<svg style="left:171px;top:483.5px" width="6" height="5" viewBox="0 0 6 5"><path d="M1 1.5L3 3.4L5 1.5" stroke="#d0d0d0" stroke-width="0.9" fill="none"/></svg>
<svg style="left:121px;top:483px" width="8" height="6" viewBox="0 0 8 6"><path d="M1 0.5V5.5" stroke="#6c6c6c" stroke-width="1"/><path d="M6 0.5L2.4 3L6 5.5Z" fill="#6c6c6c"/></svg>
<svg style="left:132px;top:483px" width="6" height="6" viewBox="0 0 6 6"><path d="M5 0.5L1.4 3L5 5.5Z" fill="#6c6c6c"/></svg>
<svg style="left:183px;top:483px" width="6" height="6" viewBox="0 0 6 6"><path d="M1 0.5L4.6 3L1 5.5Z" fill="#6c6c6c"/></svg>
<svg style="left:192px;top:483px" width="8" height="6" viewBox="0 0 8 6"><path d="M7 0.5V5.5" stroke="#6c6c6c" stroke-width="1"/><path d="M2 0.5L5.6 3L2 5.5Z" fill="#6c6c6c"/></svg>
<svg style="left:333px;top:482.5px" width="6" height="7" viewBox="0 0 6 7"><path d="M1 0.8L5 3.5L1 6.2Z" fill="#e0e0e0"/></svg>
<svg style="left:343px;top:482.5px" width="6" height="7" viewBox="0 0 6 7"><path d="M4.4 1L1.6 3.5L4.4 6" stroke="#8a8a8a" stroke-width="0.9" fill="none"/></svg>
<div style="position:absolute;left:341.5px;top:480.5px;width:297px;height:10.5px;background:#4a4a4a;"></div><div style="position:absolute;left:484px;top:482.5px;width:17px;height:6px;background:#5e5e5e;border-radius:3px;"></div><svg style="left:630px;top:482.5px" width="6" height="7" viewBox="0 0 6 7"><path d="M1.6 1L4.4 3.5L1.6 6" stroke="#bdbdbd" stroke-width="0.9" fill="none"/></svg>
<div style="position:absolute;left:0px;top:21px;width:25px;height:470px;background:#535353;"></div><div style="position:absolute;left:0px;top:21px;width:25px;height:6.5px;background:#444444;"></div><div style="position:absolute;left:25px;top:21px;width:1px;height:470px;background:#3a3a3a;"></div><svg style="left:3px;top:21.8px" width="7" height="5" viewBox="0 0 7 5"><path d="M1 0.800L2.800 2.500L1 4.200M3.600 0.800L5.400 2.500L3.600 4.200" stroke="#9a9a9a" stroke-width="0.800" fill="none"/></svg>
<div style="position:absolute;left:7px;top:30.5px;width:11px;height:1.2px;background:#454545;"></div><div style="position:absolute;left:4px;top:41px;width:17px;height:13px;background:#2c2c2c;border-radius:1px;"></div><svg style="left:4.5px;top:40.0px" width="16" height="15" viewBox="0 0 16 15"><path d="M4.200 2.400V12.600L7 9.800L12.400 9.400Z" fill="none" stroke="#f0f0f0" stroke-width="1" stroke-linejoin="round"/></svg>
<svg style="left:4.5px;top:55.0px" width="16" height="15" viewBox="0 0 16 15"><path d="M4.200 1.800V12.800L7.200 9.800L12.600 9.400Z" fill="#d4d4d4"/></svg>
<div style="position:absolute;left:18.7px;top:67.3px;width:2px;height:2px;background:#c4c4c4;"></div><svg style="left:4.5px;top:70.0px" width="16" height="15" viewBox="0 0 16 15"><g transform="translate(-1 -0.5) rotate(45 8 7.500)"><path d="M8 14.200L4.400 8.400L5.800 4.600H10.200L11.600 8.400Z" fill="#d4d4d4"/><rect x="5.300" y="1" width="5.400" height="2.700" rx="0.500" fill="#d4d4d4"/><path d="M8 13.600V9" stroke="#535353" stroke-width="0.800"/><circle cx="8" cy="8.300" r="0.950" fill="#535353"/></g></svg>
<div style="position:absolute;left:18.7px;top:82.3px;width:2px;height:2px;background:#c4c4c4;"></div><svg style="left:4.5px;top:85.0px" width="16" height="15" viewBox="0 0 16 15"><g transform="translate(0.5 -0.3) rotate(45 8 7.500)"><path d="M8 14.200L4.400 8.400L5.800 4.600H10.200L11.600 8.400Z" fill="#d4d4d4"/><rect x="5.300" y="1" width="5.400" height="2.700" rx="0.500" fill="#d4d4d4"/><path d="M8 13.600V9" stroke="#535353" stroke-width="0.800"/><circle cx="8" cy="8.300" r="0.950" fill="#535353"/></g><path d="M2.200 3.400C1.400 7 1.600 10.600 3.200 11.800C4 12.400 5 12.600 5.800 12.400" stroke="#d4d4d4" stroke-width="1.200" fill="none"/></svg>
<svg style="left:4.5px;top:100.0px" width="16" height="15" viewBox="0 0 16 15"><ellipse cx="7.600" cy="7.500" rx="5.600" ry="4.300" fill="#7c7c7c" stroke="#b4b4b4" stroke-width="0.900"/></svg>
<div style="position:absolute;left:18.7px;top:112.3px;width:2px;height:2px;background:#c4c4c4;"></div><svg style="left:4.5px;top:115.0px" width="16" height="15" viewBox="0 0 16 15"><g transform="translate(0.900 0.900) scale(0.880)"><path d="M12.800 1.400L13.800 2.400L7.800 9.600L6 7.800Z" fill="#d4d4d4"/><path d="M5.400 8.600L7 10.200C6.400 12.400 4.400 13.200 2.200 13C3.400 12 3.400 9.600 5.400 8.600Z" fill="#d4d4d4"/></g></svg>
<div style="position:absolute;left:18.7px;top:127.3px;width:2px;height:2px;background:#c4c4c4;"></div><span class="t" style="left:7.800px;top:130.1px;font-family:'Liberation Serif',serif;font-weight:700;font-size:12.600px;line-height:15px;height:15px;color:#d4d4d4;-webkit-text-stroke:0;">T</span><div style="position:absolute;left:18.7px;top:142.3px;width:2px;height:2px;background:#c4c4c4;"></div><svg style="left:4.5px;top:145.0px" width="16" height="15" viewBox="0 0 16 15"><path d="M4.800 5A4.300 4.300 0 1 1 4.400 10.400" stroke="#9c9c9c" stroke-width="1.200" fill="none"/><path d="M3 2.400L3.600 6.400L7 4.600Z" fill="#ececec"/></svg>
<div style="position:absolute;left:18.7px;top:157.3px;width:2px;height:2px;background:#c4c4c4;"></div><svg style="left:4.5px;top:160.0px" width="16" height="15" viewBox="0 0 16 15"><g transform="rotate(-45 7.800 7.700)"><rect x="3.200" y="4.400" width="9.200" height="6.600" rx="0.700" fill="#dcdcdc"/><rect x="3.200" y="4.400" width="2.600" height="6.600" rx="0.700" fill="#5a5a5a" stroke="#dcdcdc" stroke-width="0.800"/></g></svg>
<div style="position:absolute;left:18.7px;top:172.3px;width:2px;height:2px;background:#c4c4c4;"></div><svg style="left:4.5px;top:175.0px" width="16" height="15" viewBox="0 0 16 15"><g transform="translate(0 1.200)"><ellipse cx="6.600" cy="5.600" rx="4.400" ry="3.200" fill="none" stroke="#d4d4d4" stroke-width="0.900"/><ellipse cx="7.200" cy="8" rx="4.400" ry="2.800" fill="none" stroke="#d4d4d4" stroke-width="0.900"/><path d="M8.600 6.400V12.600L10.200 11L14 10.800Z" fill="#d4d4d4" stroke="#535353" stroke-width="0.400"/></g></svg>
<svg style="left:4.5px;top:190.0px" width="16" height="15" viewBox="0 0 16 15"><defs><linearGradient id="tg" x1="0" x2="1"><stop offset="0.1" stop-color="#3a3a3a"/><stop offset="1" stop-color="#f0f0f0"/></linearGradient></defs><rect x="2.900" y="3.400" width="10" height="8" fill="url(#tg)" stroke="#dadada" stroke-width="1"/></svg>
<div style="position:absolute;left:18.7px;top:202.3px;width:2px;height:2px;background:#c4c4c4;"></div><svg style="left:4.5px;top:205.0px" width="16" height="15" viewBox="0 0 16 15"><path d="M3 12.400L11.600 3.400" stroke="#d4d4d4" stroke-width="1.500"/><path d="M10.400 1.800L13.200 4.600M7.600 5L10 7.400M5.200 7.600L7.400 9.800" stroke="#d4d4d4" stroke-width="1"/><circle cx="2.800" cy="12.600" r="0.900" fill="#d4d4d4"/></svg>
<svg style="left:4.5px;top:220.0px" width="16" height="15" viewBox="0 0 16 15"><path d="M3 13.200L3.600 10.800L9 5.400L10.600 7L5.200 12.400Z" fill="none" stroke="#d4d4d4" stroke-width="0.900"/><path d="M8.400 4.200L11.800 7.600M9.600 5.400L12 2.600A1.300 1.300 0 0 1 13.600 4.200L10.800 6.600Z" fill="#d4d4d4" stroke="#d4d4d4" stroke-width="1"/></svg>
<svg style="left:4.5px;top:235.0px" width="16" height="15" viewBox="0 0 16 15"><path d="M2 12.600C4 11 5 8.400 7 8C9 7.600 10 10.400 13.800 8.400" stroke="#d4d4d4" stroke-width="1.800" fill="none" stroke-linecap="round"/><path d="M6 2.400L8.600 6.400M3 4.600L6.400 5.400M8.400 2L7.600 5.600" stroke="#d4d4d4" stroke-width="1.300" stroke-linecap="round"/><circle cx="10.600" cy="11.800" r="1" fill="#d4d4d4"/></svg>
<svg style="left:4.5px;top:250.0px" width="16" height="15" viewBox="0 0 16 15"><path d="M2 3.400H8V5.400H10V9H4.400V7H2Z" fill="#d4d4d4"/><circle cx="10.400" cy="10" r="3" fill="none" stroke="#d4d4d4" stroke-width="1"/><rect x="5.600" y="7.400" width="4.200" height="4.200" fill="none" stroke="#d4d4d4" stroke-width="0.900"/></svg>
<svg style="left:4.5px;top:265.0px" width="16" height="15" viewBox="0 0 16 15"><path d="M4.600 1.600V6.400M2.200 4H7" stroke="#d4d4d4" stroke-width="0.900" fill="none"/><path d="M5.400 4.800H10.400L12.600 7V12H5.400Z" fill="#7c7c7c" stroke="#d4d4d4" stroke-width="0.900"/><path d="M7 7.400H11M7 9.400H11" stroke="#aaaaaa" stroke-width="0.600"/></svg>
<svg style="left:4.5px;top:280.0px" width="16" height="15" viewBox="0 0 16 15"><circle cx="6.600" cy="6" r="3.900" fill="none" stroke="#d4d4d4" stroke-width="1.100"/><path d="M9.400 8.800L12.200 11.600" stroke="#d4d4d4" stroke-width="1.700" stroke-linecap="round"/></svg>
<div style="position:absolute;left:18.7px;top:292.3px;width:2px;height:2px;background:#c4c4c4;"></div><svg style="left:3px;top:299.5px" width="8" height="8" viewBox="0 0 8 8"><rect x="0.400" y="0.400" width="4.600" height="4.600" fill="#f4f4f4" stroke="#222" stroke-width="0.500"/><rect x="2.800" y="2.800" width="4.600" height="4.600" fill="#222" stroke="#f4f4f4" stroke-width="0.800"/></svg>
<svg style="left:15px;top:299.5px" width="7" height="8" viewBox="0 0 7 8"><path d="M1 2H4A2 2 0 0 1 6 4V6.600" stroke="#7a7a7a" stroke-width="0.800" fill="none"/><path d="M2.400 0.600L1 2L2.400 3.400M4.600 5.400L6 6.800L7.200 5.400" stroke="#7a7a7a" stroke-width="0.700" fill="none"/></svg>
<div style="position:absolute;left:9.8px;top:316px;width:12px;height:12px;background:#0a0a0a;box-sizing:border-box;border:1px solid #f0f0f0;"></div><div style="position:absolute;left:12.8px;top:319px;width:6px;height:6px;background:#535353;box-sizing:border-box;border:1px solid #f0f0f0;"></div><div style="position:absolute;left:3.4px;top:310.5px;width:11.8px;height:11.8px;background:#505050;box-sizing:border-box;border:0.800px solid #8c8c8c;"></div><span class="t" style="left:7.200px;top:310.600px;font-size:8.500px;color:#ffffff;">?</span><div style="position:absolute;left:2.8px;top:333px;width:5px;height:5.6px;background:#4a8fe0;box-sizing:border-box;border:0.600px solid #cfe0f6;"></div><div style="position:absolute;left:8.4px;top:333px;width:4px;height:5.6px;background:#a8a8a8;"></div><svg style="left:15.5px;top:332.8px" width="6" height="6" viewBox="0 0 6 6"><rect x="0.300" y="0.300" width="5.400" height="5.400" fill="#ffffff"/><path d="M0.300 5.700L5.700 0.300" stroke="#e02020" stroke-width="1.600"/></svg>
<svg style="left:7.5px;top:343px" width="11" height="10" viewBox="0 0 11 10"><circle cx="4.200" cy="4" r="3.200" fill="#9a9a9a" stroke="#d0d0d0" stroke-width="0.600"/><rect x="4.400" y="4.200" width="5.400" height="4.800" rx="0.800" fill="#c8c8c8" stroke="#e0e0e0" stroke-width="0.500"/></svg>
<svg style="left:5.5px;top:357.5px" width="14" height="11" viewBox="0 0 14 11"><rect x="4" y="0.600" width="9" height="6.400" fill="#7a7a7a" stroke="#d4d4d4" stroke-width="0.900"/><rect x="0.600" y="3.600" width="8.400" height="6.400" fill="#535353" stroke="#d4d4d4" stroke-width="0.900"/><rect x="1.800" y="5.600" width="6" height="3.200" fill="#8c8c8c"/></svg>
<div style="position:absolute;left:8.0px;top:382.5px;width:2px;height:2px;background:#d8d8d8;border-radius:50%;"></div><div style="position:absolute;left:11.6px;top:382.5px;width:2px;height:2px;background:#d8d8d8;border-radius:50%;"></div><div style="position:absolute;left:15.2px;top:382.5px;width:2px;height:2px;background:#d8d8d8;border-radius:50%;"></div><svg style="left:0px;top:486.5px" width="4.5" height="4.5" viewBox="0 0 4.5 4.5"><path d="M0 0V4.500H4.500A4.500 4.500 0 0 1 0 0Z" fill="#1a1a1a"/></svg>
<div style="position:absolute;left:0px;top:0px;width:900px;height:20px;background:#4e4e4e;"></div><div style="position:absolute;left:0px;top:0px;width:900px;height:1px;background:#6a6a6a;"></div><div style="position:absolute;left:0px;top:20px;width:900px;height:1px;background:#343434;"></div><div style="position:absolute;left:5px;top:6px;width:8px;height:8px;background:#ee5e57;border-radius:50%;"></div><div style="position:absolute;left:17.5px;top:6px;width:8px;height:8px;background:#f6bd2f;border-radius:50%;"></div><div style="position:absolute;left:30px;top:6px;width:8px;height:8px;background:#2fc840;border-radius:50%;"></div><div style="position:absolute;left:7.8px;top:8.8px;width:2.4px;height:2.4px;background:#7d120c;border-radius:50%;"></div><svg style="left:47px;top:4px" width="13" height="12" viewBox="0 0 13 12"><path d="M6.5 0.8L0.6 6.2H2.3V11H5.2V7.6H7.8V11H10.7V6.2H12.4L10 4V1.6H8.6V2.7Z" fill="#d6d6d6"/></svg>
<div style="position:absolute;left:66px;top:3px;width:1px;height:14px;background:#5a5a5a;"></div><div style="position:absolute;left:794px;top:2.5px;width:33px;height:14.5px;background:#1473e6;border-radius:7.5px;"></div><svg style="left:832px;top:3px" width="14" height="14" viewBox="0 0 14 14"><circle cx="5.4" cy="5.4" r="3.3" stroke="#e0e0e0" stroke-width="1.2" fill="none"/><path d="M7.9 7.9L11.6 11.4" stroke="#e0e0e0" stroke-width="1.5" stroke-linecap="round"/></svg>
<div style="position:absolute;left:850px;top:3px;width:1px;height:14px;background:#5c5c5c;"></div><svg style="left:861px;top:5.5px" width="12" height="8" viewBox="0 0 12 8"><rect x="0.5" y="0.5" width="4.6" height="7" fill="#d8d8d8"/><rect x="6" y="0.5" width="5" height="3" fill="#d8d8d8"/><rect x="6" y="4.4" width="5" height="3.1" fill="#d8d8d8"/></svg>
<svg style="left:883px;top:5px" width="12" height="9" viewBox="0 0 12 9"><rect x="0.6" y="0.6" width="10.3" height="7.8" fill="none" stroke="#d8d8d8" stroke-width="1.1"/><rect x="1.6" y="2" width="3" height="5.4" fill="#c6c6c6"/></svg>
<span class="t" style="left:413.6px;top:4.30px;font-size:8.43px;letter-spacing:0.009px;font-weight:400;color:#e4e4e4;-webkit-text-stroke-width:0.34px;">Adobe Illustrator 2024</span>
<span class="t" style="left:800px;top:3.90px;font-size:7.71px;letter-spacing:-0.227px;font-weight:700;color:#ffffff;">Share</span>
<span class="t" style="left:41px;top:23.20px;font-size:7.16px;letter-spacing:-0.15px;font-weight:700;color:#f2f2f2;">Untitled-1* @ 27.03 % (RGB/Preview)</span>
<span class="t" style="left:698.8px;top:37.80px;font-size:6.9px;letter-spacing:-0.196px;font-weight:700;color:#ffffff;">Character</span>
<span class="t" style="left:698.8px;top:54.80px;font-size:6.93px;letter-spacing:-0.193px;font-weight:700;color:#ffffff;">Paragraph</span>
<span class="t" style="left:698.8px;top:72.70px;font-size:6.98px;letter-spacing:-0.194px;font-weight:700;color:#ffffff;">OpenType</span>
<span class="t" style="left:698.8px;top:97.80px;font-size:7.01px;letter-spacing:-0.125px;font-weight:700;color:#ffffff;">Transfor...</span>
<span class="t" style="left:698.8px;top:115.10px;font-size:6.97px;letter-spacing:-0.178px;font-weight:700;color:#ffffff;">Align</span>
<span class="t" style="left:698.8px;top:133.10px;font-size:6.99px;letter-spacing:-0.149px;font-weight:700;color:#ffffff;">Pathfinder</span>
<span class="t" style="left:698.8px;top:158.30px;font-size:7.04px;letter-spacing:-0.118px;font-weight:700;color:#ffffff;">Image Tr...</span>
<span class="t" style="left:749px;top:30.30px;font-size:7.05px;letter-spacing:-0.206px;font-weight:700;color:#ffffff;">Properties</span>
<span class="t" style="left:793px;top:30.30px;font-size:7.05px;letter-spacing:-0.231px;font-weight:400;color:#c8c8c8;">Layers</span>
<span class="t" style="left:820px;top:30.30px;font-size:7.62px;letter-spacing:0.006px;font-weight:400;color:#c8c8c8;">Artboar</span>
<span class="t" style="left:850px;top:30.30px;font-size:7.05px;letter-spacing:-0.215px;font-weight:400;color:#c8c8c8;">Asset E</span>
<span class="t" style="left:749.5px;top:49.80px;font-size:6.64px;letter-spacing:-0.4px;font-weight:400;color:#dcdcdc;">Path</span>
<span class="t" style="left:749.5px;top:71.30px;font-size:7.15px;letter-spacing:-0.095px;font-weight:400;color:#dcdcdc;">Transform</span>
<span class="t" style="left:768px;top:85.80px;font-size:6.69px;letter-spacing:-0.319px;font-weight:400;color:#c8c8c8;">X:</span>
<span class="t" style="left:781px;top:85.30px;font-size:7.6px;letter-spacing:0.0px;font-weight:400;color:#ffffff;">1142.5 p</span>
<span class="t" style="left:821px;top:85.80px;font-size:6.87px;letter-spacing:-0.262px;font-weight:400;color:#c8c8c8;">W:</span>
<span class="t" style="left:836px;top:85.30px;font-size:7.24px;letter-spacing:-0.145px;font-weight:400;color:#ffffff;">609 px</span>
<span class="t" style="left:768px;top:102.30px;font-size:6.93px;letter-spacing:-0.163px;font-weight:400;color:#c8c8c8;">Y:</span>
<span class="t" style="left:781px;top:101.80px;font-size:7.24px;letter-spacing:-0.145px;font-weight:400;color:#ffffff;">476 px</span>
<span class="t" style="left:822px;top:102.30px;font-size:6.39px;letter-spacing:-0.4px;font-weight:400;color:#c8c8c8;">H:</span>
<span class="t" style="left:836px;top:101.80px;font-size:7.24px;letter-spacing:-0.145px;font-weight:400;color:#ffffff;">458 px</span>
<span class="t" style="left:782px;top:118.30px;font-size:6.67px;letter-spacing:-0.4px;font-weight:400;color:#ffffff;">0°</span>
<span class="t" style="left:764.5px;top:150.60px;font-size:7.03px;letter-spacing:-0.113px;font-weight:400;color:#dcdcdc;">Text to Vector Graphic (Beta)</span>
<span class="t" style="left:749.5px;top:166.80px;font-size:6.98px;letter-spacing:-0.204px;font-weight:400;color:#dcdcdc;">Type</span>
<span class="t" style="left:772px;top:183.60px;font-size:6.92px;letter-spacing:-0.177px;font-weight:400;color:#ffffff;">Subject</span>
<span class="t" style="left:769px;top:206.20px;font-size:7.24px;letter-spacing:-0.287px;font-weight:400;color:#ffffff;">Styles:</span>
<span class="t" style="left:794px;top:206.20px;font-size:6.78px;letter-spacing:-0.4px;font-weight:400;color:#ffffff;">None</span>
<span class="t" style="left:757px;top:227.80px;font-size:6.89px;letter-spacing:-0.178px;font-weight:400;color:#ffffff;">Reference Asset</span>
<span class="t" style="left:779px;top:249.80px;font-size:7.03px;letter-spacing:-0.137px;font-weight:400;color:#7c7c7c;">Artwork</span>
<span class="t" style="left:843px;top:249.80px;font-size:6.87px;letter-spacing:-0.213px;font-weight:400;color:#7c7c7c;">Picker</span>
<span class="t" style="left:769px;top:281.70px;font-size:7.44px;letter-spacing:-0.125px;font-weight:400;color:#ffffff;">Settings</span>
<span class="t" style="left:756px;top:311.70px;font-size:7.07px;letter-spacing:-0.098px;font-weight:400;color:#ffffff;">Detail in vector graphics</span>
<span class="t" style="left:756px;top:332.80px;font-size:6.97px;letter-spacing:-0.165px;font-weight:400;color:#dcdcdc;">Minimal</span>
<span class="t" style="left:854px;top:332.80px;font-size:7.07px;letter-spacing:-0.145px;font-weight:400;color:#dcdcdc;">Complex</span>
<span class="t" style="left:749.5px;top:356.90px;font-size:6.97px;letter-spacing:-0.186px;font-weight:400;color:#dcdcdc;">Prompt</span>
<span class="t" style="left:753.4px;top:372.60px;font-size:7.05px;letter-spacing:-0.247px;font-weight:400;color:#e6e6e6;font-style:italic;">Describe the vector graphic you want</span>
<span class="t" style="left:753.4px;top:384.80px;font-size:7.05px;letter-spacing:-0.306px;font-weight:400;color:#e6e6e6;font-style:italic;">to generate</span>
<span class="t" style="left:802px;top:402.80px;font-size:7.05px;letter-spacing:-0.324px;font-weight:400;color:#757575;">Generate (Beta)</span>
<span class="t" style="left:749.5px;top:422.30px;font-size:7.05px;letter-spacing:-0.277px;font-weight:400;color:#dcdcdc;">Sample Prompts</span>
<span class="t" style="left:750px;top:479.50px;font-size:5.94px;letter-spacing:-0.16px;font-weight:400;color:#dcdcdc;">Big juicy burg...</span>
<span class="t" style="left:796px;top:479.50px;font-size:5.94px;letter-spacing:-0.159px;font-weight:400;color:#dcdcdc;">colorful space...</span>
<span class="t" style="left:841px;top:479.50px;font-size:6.19px;letter-spacing:-0.052px;font-weight:400;color:#dcdcdc;">illustration of...</span>
<span class="t" style="left:591px;top:55.30px;font-size:7.77px;letter-spacing:-0.189px;font-weight:400;color:#8c8c8c;">Reset</span>
<span class="t" style="left:460px;top:74.60px;font-size:7.99px;letter-spacing:-0.081px;font-weight:400;color:#ffffff;-webkit-text-stroke-width:0.34px;">Recolor</span>
<span class="t" style="left:500.5px;top:74.60px;font-size:8.06px;letter-spacing:-0.048px;font-weight:400;color:#ffffff;-webkit-text-stroke-width:0.34px;">Generative Recolor</span>
<span class="t" style="left:460px;top:97.30px;font-size:6.97px;letter-spacing:-0.186px;font-weight:400;color:#dcdcdc;">Prompt</span>
<span class="t" style="left:464px;top:111.30px;font-size:8.49px;letter-spacing:-0.033px;font-weight:400;color:#ffffff;-webkit-text-stroke-width:0.34px;">Trippy disco lights</span>
<span class="t" style="left:460px;top:143.80px;font-size:6.91px;letter-spacing:-0.189px;font-weight:400;color:#dcdcdc;">Colors</span>
<span class="t" style="left:594px;top:157.60px;font-size:8.19px;letter-spacing:-0.163px;font-weight:400;color:#ffffff;-webkit-text-stroke-width:0.34px;">Generate</span>
<span class="t" style="left:467px;top:183.30px;font-size:6.87px;letter-spacing:-0.208px;font-weight:400;color:#dcdcdc;">Sample Prompts</span>
<span class="t" style="left:467px;top:205.60px;font-size:7.08px;letter-spacing:-0.103px;font-weight:400;color:#dcdcdc;">Variations</span>
<span class="t" style="left:553.2px;top:438.00px;font-size:8.29px;letter-spacing:-0.102px;font-weight:400;color:#ffffff;-webkit-text-stroke-width:0.34px;">Advanced Options...</span>
<span class="t" style="left:30.5px;top:479.80px;font-size:6.87px;letter-spacing:-0.151px;font-weight:400;color:#ffffff;">27.03%</span>
<span class="t" style="left:76px;top:479.80px;font-size:6.68px;letter-spacing:-0.38px;font-weight:400;color:#ffffff;">0°</span>
<span class="t" style="left:145px;top:479.80px;font-size:6.05px;letter-spacing:-0.4px;font-weight:400;color:#ffffff;">1</span>
<span class="t" style="left:232.5px;top:479.80px;font-size:7.05px;letter-spacing:-0.046px;font-weight:400;color:#dcdcdc;">Toggle Direct Selection</span>
</div></body></html>
